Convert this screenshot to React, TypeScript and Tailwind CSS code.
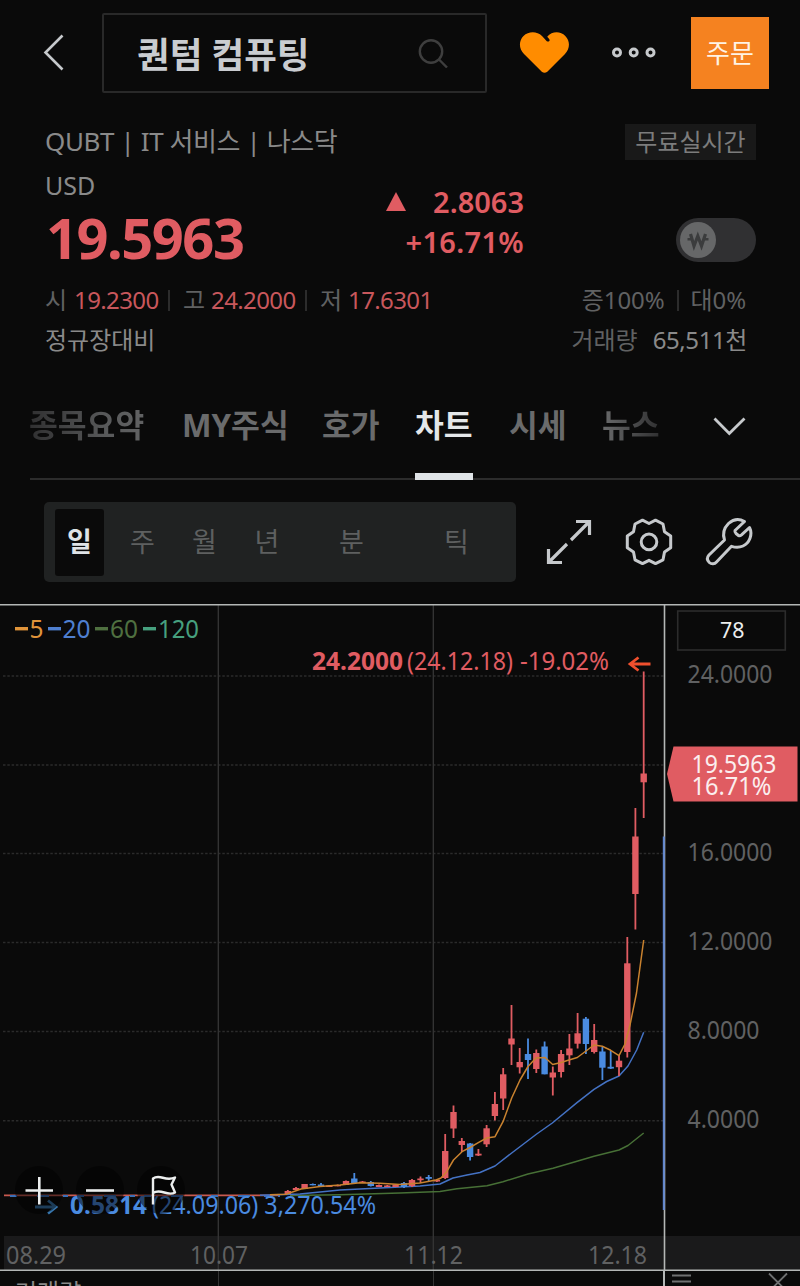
import { clsx } from "clsx"

const RED = "#e05c62"
const BLUE = "#4a8be0"

const tabs = [
  { label: "종목요약", className: "ml-[29px] w-[153px] bg-linear-to-r from-[#303031] via-[#58595a] to-[#6a6b6c] bg-clip-text text-transparent" },
  { label: "MY주식", className: "w-[140px] text-[#6a6b6c]" },
  { label: "호가", className: "w-[93px] text-[#6a6b6c]" },
  { label: "차트", className: "w-[94px] text-[#e4e7e9]", active: true },
  { label: "시세", className: "w-[93px] text-[#6a6b6c]" },
  { label: "뉴스", className: "w-[58px] bg-linear-to-r from-[#6a6b6c] to-[#303031] bg-clip-text text-transparent" },
]

const periods = [
  { label: "주", className: "w-[77px]" },
  { label: "월", className: "w-[47px]" },
  { label: "년", className: "w-[78px]" },
  { label: "분", className: "w-[91px]" },
  { label: "틱", className: "w-[119px]" },
]

// [x, up, high, bodyTop, bodyBottom, low]
const candles: [number, boolean, number, number, number, number][] = [
  [287.8, true, 1190, 1191, 1194, 1194],
  [296, true, 1187, 1188, 1190, 1190],
  [304.6, true, 1184, 1184, 1189, 1189],
  [312.8, false, 1183.5, 1184, 1185.3, 1185.3],
  [321, false, 1183, 1184.5, 1186.5, 1187],
  [329.3, true, 1185, 1185.5, 1187, 1187],
  [337.7, true, 1184.5, 1185, 1186.3, 1186.3],
  [346, true, 1180.5, 1181, 1185, 1185],
  [354.3, false, 1173, 1178.5, 1183, 1184],
  [362.5, true, 1181, 1181.5, 1183, 1183],
  [370.8, false, 1181, 1182, 1186, 1186.5],
  [379, true, 1184.5, 1185, 1187, 1187],
  [387.3, true, 1185, 1185.5, 1187, 1187],
  [395.6, true, 1184, 1184.5, 1187, 1187],
  [404, false, 1182, 1183, 1187, 1188],
  [412, true, 1179, 1180, 1186, 1187],
  [420.5, true, 1176.5, 1178.5, 1180.2, 1183],
  [428.7, false, 1175, 1177, 1178.8, 1181],
  [436.9, true, 1179, 1179.7, 1181.5, 1182],
  [445.2, true, 1134, 1151, 1178, 1179],
  [453.5, true, 1105.5, 1112, 1128.5, 1138],
  [461.8, true, 1138, 1141, 1145, 1152],
  [470.1, false, 1143, 1143.5, 1157, 1160.5],
  [478.4, true, 1149, 1153.7, 1155.5, 1156],
  [486.6, true, 1125, 1128.3, 1144.3, 1147],
  [494.9, true, 1092, 1104, 1116, 1120.5],
  [503.2, true, 1068, 1074.3, 1098.5, 1110],
  [511.5, true, 1005, 1038.5, 1044.5, 1065],
  [519.7, true, 1048, 1062, 1067.3, 1073.5],
  [528, false, 1038.5, 1054, 1060, 1079],
  [536.3, true, 1049.5, 1053, 1069, 1073],
  [544.6, false, 1041.5, 1046.5, 1074.3, 1074.3],
  [552.8, true, 1066.5, 1072.5, 1077.5, 1095.5],
  [561.1, true, 1050, 1054, 1072, 1077.5],
  [569.4, true, 1034, 1048.5, 1055.3, 1065],
  [577.6, true, 1013, 1033.3, 1043.7, 1048.5],
  [585.9, false, 1017, 1018.7, 1044, 1054],
  [594.2, true, 1024, 1040, 1052, 1053.5],
  [602.4, false, 1047, 1051.5, 1067.7, 1080],
  [610.7, false, 1051, 1066.8, 1068.6, 1069],
  [619, true, 1055, 1060.7, 1067.2, 1076],
  [627.3, true, 937, 963.3, 1052, 1057.5],
  [635.4, true, 808, 836.5, 894, 929.5],
  [643.7, true, 671.5, 773.5, 782.3, 818],
]

const ma5 =
  "M270 1194.8L286 1194.3L301 1189L320 1186.5L340 1185L360 1182.7L380 1183.3L400 1184.5L420 1183L436 1180L441 1178L446.7 1171.7L453.5 1160L462 1151.7L470 1147.5L478.3 1142.7L486.7 1138L495 1136.7L503 1121.7L511.7 1098L520 1080L528 1066.5L536 1058L545 1057.5L552.7 1064.5L561 1062.5L569 1060L577.3 1057.5L586 1051L594 1045L602.3 1046.3L610.7 1050.3L619 1055.7L625 1044L630 1025L636.5 993L643.7 940"
const ma20 =
  "M260 1195.3L300 1194L340 1190L380 1188L420 1186L440 1184L453 1178L467 1175L480 1172.5L495 1166L511.7 1153L536.7 1134L552.3 1123L577 1102.7L594 1089.3L606.7 1081.5L619 1076L628 1066L636.7 1050L643.7 1032.3"
const ma60 =
  "M290 1195.5L340 1194.8L400 1193L440 1191.5L457 1188.7L487 1185.7L503 1181.7L528 1174L553 1168.3L577 1161.3L594 1156.3L619 1150L628 1145.5L643.7 1133"

const gridLines = [676, 765, 853.5, 942.5, 1031.5, 1120.7]

const priceLabels = [
  { y: 682.5, w: 85, text: "24.0000" },
  { y: 860.5, w: 85, text: "16.0000" },
  { y: 949.5, w: 85, text: "12.0000" },
  { y: 1038.5, w: 72, text: "8.0000" },
  { y: 1128, w: 72, text: "4.0000" },
]

const dateLabels = [
  { x: 6, w: 60, text: "08.29" },
  { x: 190, w: 58, text: "10.07" },
  { x: 404, w: 59, text: "11.12" },
  { x: 588, w: 59, text: "12.18" },
]

const averages = [
  { x: 15, tx: 29.5, w: 14, label: "5", color: "#e0943a" },
  { x: 48, tx: 62.5, w: 28, label: "20", color: "#4f7fd0" },
  { x: 95, tx: 110, w: 28, label: "60", color: "#4f7040" },
  { x: 143, tx: 158, w: 41, label: "120", color: "#46a07e" },
]

function Header() {
  return (
    <header className="flex h-[106px] items-start pt-[13px]">
      <svg className="mt-[20px] ml-[42px] h-[40px] w-[24px] shrink-0" viewBox="42 33 24 40" fill="none" stroke="#c6c9cc" strokeWidth="2.6">
        <path d="M62.5 35.5L45.5 52.5L62.5 69.5" />
      </svg>
      <div className="ml-[36px] flex h-[80px] w-[385px] shrink-0 items-center rounded-[2px] border-2 border-[#292929] pl-[33px]">
        <h1 className="w-[281px] pt-[2px] text-[35.5px] leading-[44px] font-bold whitespace-nowrap text-[#c9ccd0]">퀀텀 컴퓨팅</h1>
        <svg className="h-[30px] w-[30px] shrink-0" viewBox="418 37 30 30" fill="none" stroke="#3e3e3e" strokeWidth="2.4">
          <circle cx="431" cy="50.5" r="11.2" />
          <path d="M439 58.5L447 66.5" />
        </svg>
      </div>
      <svg className="mt-[18px] ml-[32px] h-[44px] w-[52px] shrink-0" viewBox="519 31 52 44" fill="#ff8c00">
        <path d="M541.8 71.7L524 54C518.5 48.5 518.8 40.5 523.5 36C528.5 31 537 31 542 36L546.8 41.2Q548.3 42 549.3 41Q550 40 549 38.8L547.2 36.8C552 31 560.5 31 565.3 36C570.2 40.8 570.2 48.5 565 54L547.3 71.7Q544.5 74 541.8 71.7Z" />
      </svg>
      <svg className="mt-[33px] ml-[40px] h-[14px] w-[46px] shrink-0" viewBox="611 46 46 14" fill="none" stroke="#c6c9cc" strokeWidth="3">
        <circle cx="617" cy="52.5" r="3.5" />
        <circle cx="633.7" cy="52.5" r="3.5" />
        <circle cx="650.5" cy="52.5" r="3.5" />
      </svg>
      <button className="mt-[4px] ml-[34px] flex h-[72px] w-[78px] shrink-0 items-center justify-center bg-[#f58220] text-[26px] text-[#fff3e4]">
        주문
      </button>
    </header>
  )
}

function Quote() {
  return (
    <section className="pr-[44px] pl-[45px] text-[24px] text-[#8a8a8a]">
      <div className="flex h-[70px] items-start justify-between pt-[18px]">
        <p className="text-[26px] leading-[34px] tracking-[-0.4px] whitespace-pre">QUBT | IT 서비스 | 나스닥</p>
        <span className="flex h-[36px] w-[131px] items-center justify-center bg-[#191919] text-[24px] text-[#7c7c7c]">무료실시간</span>
      </div>
      <div className="-mt-[8px] flex h-[112px] items-start">
        <div className="w-[341px]">
          <p className="pt-px text-[25px] leading-[32px]">USD</p>
          <p className="ml-[1px] text-[56px] leading-[72px] font-bold tracking-[-1.5px] text-[#e05c62]">19.5963</p>
        </div>
        <div className="w-[138px] text-right text-[29px] leading-[40px] font-semibold text-[#e05c62]">
          <div className="flex items-center justify-between pt-[14px]">
            <svg className="h-[20px] w-[20px]" viewBox="0 0 20 20" fill={RED}>
              <path d="M10 0L20 19H0Z" />
            </svg>
            <span>2.8063</span>
          </div>
          <p className="tracking-[0.3px]">+16.71%</p>
        </div>
        <div className="mt-[50px] ml-auto flex h-[44px] w-[80px] items-center rounded-full bg-[#303032] pl-[4px]">
          <svg className="h-[36px] w-[36px]" viewBox="0 0 36 36" fill="none">
            <circle cx="18" cy="18" r="18" fill="#666768" />
            <path d="M10.5 12L14 24L17.8 14L21.5 24L25.5 12" stroke="#3b3c3d" strokeWidth="3.2" />
            <path d="M7.5 17.3H11M25 17.3H28.5" stroke="#3b3c3d" strokeWidth="2.4" />
          </svg>
        </div>
      </div>
      <div className="flex h-[40px] items-center pr-[10px] tracking-[-0.6px] whitespace-nowrap text-[#606162]">
        <span className="w-[29px]">시</span>
        <span className="w-[94px] text-[#c8575c]">19.2300</span>
        <i className="mr-[13px] h-[21px] w-[2px] bg-[#2c2c2c]" />
        <span className="w-[28px]">고</span>
        <span className="w-[94px] text-[#c8575c]">24.2000</span>
        <i className="mr-[13px] h-[21px] w-[2px] bg-[#2c2c2c]" />
        <span className="w-[28px]">저</span>
        <span className="text-[#c8575c]">17.6301</span>
        <span className="ml-auto tracking-[-0.1px]">증100%</span>
        <i className="mr-[12px] ml-[12px] h-[21px] w-[2px] bg-[#2c2c2c]" />
        <span className="tracking-[-0.1px]">대0%</span>
      </div>
      <div className="flex h-[40px] items-center pr-[9px] whitespace-nowrap">
        <span>정규장대비</span>
        <span className="mr-[15px] ml-auto text-[#606162]">거래량</span>
        <span className="tracking-[-0.4px]">65,511천</span>
      </div>
    </section>
  )
}

function Tabs() {
  return (
    <nav className="mt-[20px] flex h-[110px] text-[31.3px] leading-[91px] font-bold whitespace-nowrap">
      {tabs.map((tab) => (
        <div key={tab.label} className={clsx("h-[92px] shrink-0", tab.className)}>
          {tab.label}
          {tab.active && <div className="relative z-10 mt-[2px] h-[7px] w-[58px] bg-[#dfe3e6]" />}
        </div>
      ))}
      <svg className="mt-[36px] ml-[51px] h-[22px] w-[36px]" viewBox="711 416 36 22" fill="none" stroke="#c6c9cc" strokeWidth="2.8">
        <path d="M714.5 418.5L729.3 433.5L744.5 418.5" />
      </svg>
    </nav>
  )
}

function Toolbar() {
  return (
    <div className="flex h-[124px] items-start pt-[22px] pl-[44px]">
      <div className="flex h-[80px] w-[472px] items-center rounded-[5px] bg-[#202222] pl-[11px] text-[27px] text-[#5e6060]">
        <span className="flex h-[67px] w-[49px] items-center justify-center rounded-[3px] bg-[#0a0a0a] font-bold text-[#dfe3e6]">일</span>
        {periods.map((period) => (
          <span key={period.label} className={clsx("text-center", period.className)}>
            {period.label}
          </span>
        ))}
      </div>
      <svg className="ml-[24px] h-[80px] w-[220px]" viewBox="540 502 220 80" fill="none" stroke="#c6c9cc" strokeWidth="3.2">
        <path d="M576 521.5H589.5V535M589 522L571 540M548.5 549V562.5H562M549 562L567 544" />
        <g strokeLinejoin="round" strokeWidth="3">
          <path d="M649 523.5L655.5 520.2L663 524L664.5 531.8L670.7 536V547.8L664.5 552L663 559.8L655.5 563.6L649 560.3L642.5 563.6L635 559.8L633.5 552L627.3 547.8V536L633.5 531.8L635 524L642.5 520.2Z" />
          <circle cx="649" cy="541.9" r="7.8" />
          <path d="M744.5 521.5L735 530.5Q734.5 532 736 533.5L738.5 535.5Q740 536 741.5 534.8L749.5 527.5C753 534.5 749.5 543 743 546C739 547.8 735 547.5 731.5 546.3L716.5 562C714.5 564.3 711.5 564.5 709.3 562.5C706.8 560 707 557.2 709 555L724.5 540C722.5 534 724 528 728.5 523.5C733 519.5 739 518.5 744.5 521.5Z" />
        </g>
      </svg>
    </div>
  )
}

function Chart() {
  return (
    <section className="relative h-[667px]">
      <svg className="block h-[667px] w-[800px]" viewBox="0 604 800 667" fontSize="25">
        <rect x="4" y="1236" width="796" height="34" fill="#1a1a1b" />
        {gridLines.map((y) => (
          <path key={y} d={`M3 ${y}H664`} stroke="#2b2b2b" strokeWidth="1.4" strokeDasharray="2.5 1.8" />
        ))}
        <path d="M218.3 605V1270M433.3 605V1270" stroke="#333333" strokeWidth="1.4" />

        {averages.map((item) => (
          <g key={item.label} fill={item.color}>
            <rect x={item.x} y="627" width="13" height="3.4" />
            <text x={item.tx} y="637.5" textLength={item.w} lengthAdjust="spacingAndGlyphs">
              {item.label}
            </text>
          </g>
        ))}

        <g fill="none" strokeWidth="1.5" strokeLinejoin="round">
          <path d="M4 1195.3H280" stroke="#c85a50" strokeWidth="1.8" />
          <path d="M10 1196H280" stroke="#3c6fb8" strokeWidth="2" strokeDasharray="7 20 12 14 5 9" />
          <path d={ma60} stroke="#477036" />
          <path d={ma20} stroke="#4472c4" />
        </g>
        {candles.map(([x, up, high, top, bottom, low]) => (
          <g key={x} fill={up ? RED : BLUE}>
            <rect x={x - 0.9} y={high} width="1.8" height={low - high} />
            <rect x={x - 3.2} y={top} width="6.4" height={bottom - top} />
          </g>
        ))}
        <path d={ma5} fill="none" stroke="#c9822f" strokeWidth="1.5" strokeLinejoin="round" />

        <g fill={RED}>
          <text x="312" y="670" fontWeight="700" textLength="91" lengthAdjust="spacingAndGlyphs">24.2000</text>
          <text x="407" y="670" textLength="106" lengthAdjust="spacingAndGlyphs">(24.12.18)</text>
          <text x="520" y="670" textLength="89" lengthAdjust="spacingAndGlyphs">-19.02%</text>
        </g>
        <path d="M650.5 664H630M638.5 657.5L630 664L638.5 670.5" fill="none" stroke="#f0502e" strokeWidth="2.8" />

        <g fill={BLUE}>
          <text x="70" y="1213.5" fontWeight="700" textLength="77" lengthAdjust="spacingAndGlyphs">0.5814</text>
          <text x="152" y="1213.5" textLength="224" lengthAdjust="spacingAndGlyphs">(24.09.06) 3,270.54%</text>
        </g>
        <path d="M35 1207H56M48 1200.5L56 1207L48 1213.5" fill="none" stroke="#3878b0" strokeWidth="2.8" />

        <path d="M0 604.8H800M0 1270.3H800" stroke="#b4b7b6" strokeWidth="1.6" />
        <path d="M664.5 605V1271" stroke="#b4b7b6" strokeWidth="1.6" />
        <path d="M663.8 836.5V1210" stroke="#5f86cf" strokeWidth="2" />

        <rect x="677.7" y="611" width="107.6" height="39" fill="none" stroke="#2c2c2c" strokeWidth="1.6" />
        <text x="720" y="637.5" fontSize="22.5" fill="#eceeee" textLength="24.5" lengthAdjust="spacingAndGlyphs">78</text>
        <g fill="#606162">
          {priceLabels.map((label) => (
            <text key={label.text} x="687.5" y={label.y} textLength={label.w} lengthAdjust="spacingAndGlyphs">
              {label.text}
            </text>
          ))}
          {dateLabels.map((label) => (
            <text key={label.text} x={label.x} y="1263.5" textLength={label.w} lengthAdjust="spacingAndGlyphs">
              {label.text}
            </text>
          ))}
        </g>

        <path d="M673.5 746.5H797.5V801.5H673.5L667 774Z" fill={RED} />
        <g fill="#fbeeee">
          <text x="691.5" y="772.5" textLength="85" lengthAdjust="spacingAndGlyphs">19.5963</text>
          <text x="691.5" y="795" textLength="80" lengthAdjust="spacingAndGlyphs">16.71%</text>
        </g>
      </svg>

      {/* zoom and flag controls float over the price line */}
      <div className="absolute top-[562px] left-[15px] flex gap-[13px]">
        <button className="h-[48px] w-[48px] rounded-full bg-black/50">
          <svg viewBox="0 0 48 48" stroke="#eceeee" strokeWidth="2.6">
            <path d="M10.5 24.5H38M24.3 11V38.5" />
          </svg>
        </button>
        <button className="h-[48px] w-[48px] rounded-full bg-black/50">
          <svg viewBox="0 0 48 48" stroke="#eceeee" strokeWidth="2.6">
            <path d="M10 24.5H38" />
          </svg>
        </button>
        <button className="h-[48px] w-[48px] rounded-full bg-black/50">
          <svg viewBox="0 0 48 48" fill="none" stroke="#eceeee" strokeWidth="2.4" strokeLinejoin="round">
            <path d="M16 38.5V12.5C23 7.5 28 16 38 11.5L34.5 18.5L38 26.5C30 31 24 21.5 16 27" />
          </svg>
        </button>
      </div>
    </section>
  )
}

function VolumePanel() {
  return (
    <section className="flex h-[15px] overflow-hidden text-[24px] leading-[36px] text-[#8a8a8a]">
      <div className="h-full w-[219px] border-r border-[#333333] pl-[15px]">
        <span className="block pt-[3px]">거래량</span>
      </div>
      <div className="h-full w-[215px] border-r border-[#333333]" />
      <div className="h-full w-[231px] border-r-2 border-[#b4b7b6]" />
      <svg className="h-[15px] w-[135px]" viewBox="665 1271 135 15" fill="none" stroke="#6f7071" strokeWidth="1.8">
        <path d="M672 1275.5H691M672 1281.5H691M769 1273.5L787 1291.5M787 1273.5L769 1291.5" />
      </svg>
    </section>
  )
}

export default function App() {
  return (
    <main className="h-[1286px] w-[800px] overflow-hidden bg-[#0a0a0a] font-['Noto_Sans','Noto_Sans_CJK_KR',sans-serif]">
      <Header />
      <Quote />
      <Tabs />
      <div className="-mt-[12px] ml-[30px] h-[2px] bg-[#2c2c2c]" />
      <Toolbar />
      <Chart />
      <VolumePanel />
    </main>
  )
}
